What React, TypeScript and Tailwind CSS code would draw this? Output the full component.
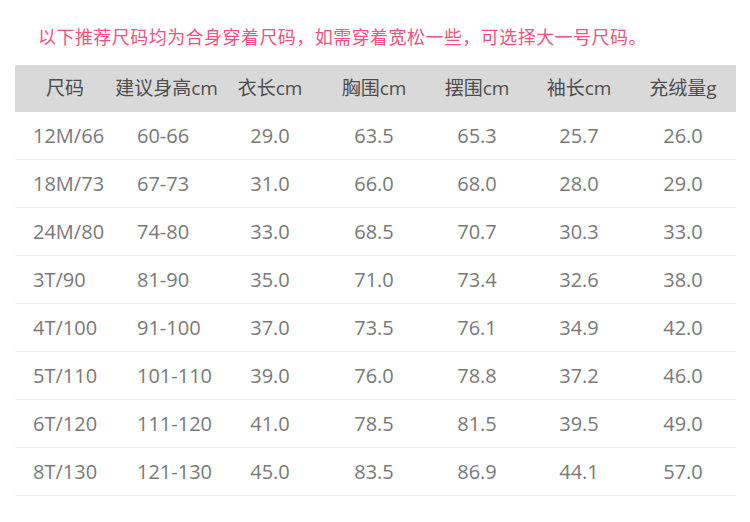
import React from "react";

const rows: string[][] = [
  ["12M/66", "60-66", "29.0", "63.5", "65.3", "25.7", "26.0"],
  ["18M/73", "67-73", "31.0", "66.0", "68.0", "28.0", "29.0"],
  ["24M/80", "74-80", "33.0", "68.5", "70.7", "30.3", "33.0"],
  ["3T/90", "81-90", "35.0", "71.0", "73.4", "32.6", "38.0"],
  ["4T/100", "91-100", "37.0", "73.5", "76.1", "34.9", "42.0"],
  ["5T/110", "101-110", "39.0", "76.0", "78.8", "37.2", "46.0"],
  ["6T/120", "111-120", "41.0", "78.5", "81.5", "39.5", "49.0"],
  ["8T/130", "121-130", "45.0", "83.5", "86.9", "44.1", "57.0"],
];

const headers = ["尺码", "建议身高cm", "衣长cm", "胸围cm", "摆围cm", "袖长cm", "充绒量g"];

const grid = "grid grid-cols-[100px_103px_104px_104px_102px_102px_106px]";

export default function App() {
  return (
    <div
      className="w-[750px] h-[522px] bg-white overflow-hidden"
      style={{ fontFamily: '"Open Sans", "Noto Sans CJK SC", sans-serif' }}
    >
      <div className="pl-[38px] pt-[25px] h-[65px] text-[18px] leading-[24px] text-[#f4527e] tracking-[0.45px]">
        以下推荐尺码均为合身穿着尺码，如需穿着宽松一些，可选择大一号尺码。
      </div>
      <div className="ml-[15px] w-[721px]">
        <div className={`${grid} h-[47px] items-center bg-[#d9d9d9] text-[19px] text-[#4d4d4d]`}>
          {headers.map((h, i) => (
            <div key={i} className="text-center whitespace-nowrap">
              {h}
            </div>
          ))}
        </div>
        {rows.map((r, ri) => (
          <div
            key={ri}
            className={`${grid} h-[48px] items-center border-b border-[#efefef] text-[20px] text-[#797979]`}
          >
            <div className="pl-[18px] whitespace-nowrap">{r[0]}</div>
            <div className="pl-[22px] whitespace-nowrap">{r[1]}</div>
            {r.slice(2).map((c, ci) => (
              <div key={ci} className="text-center whitespace-nowrap">
                {c}
              </div>
            ))}
          </div>
        ))}
      </div>
    </div>
  );
}
